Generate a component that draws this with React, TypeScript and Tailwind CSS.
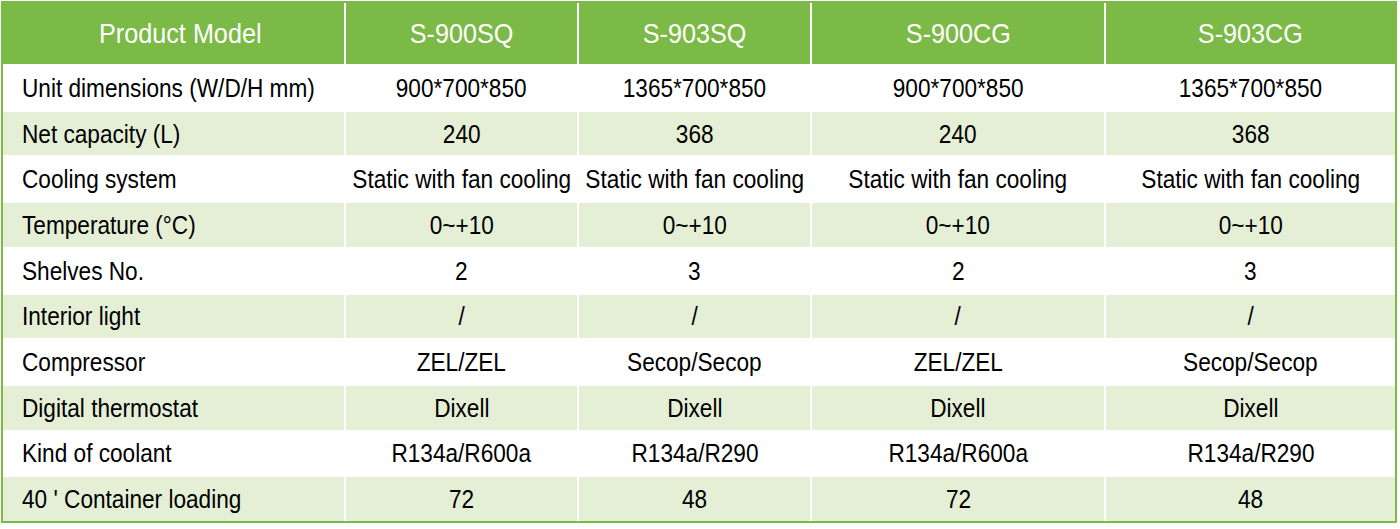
import React from "react";

const header = ["Product Model", "S-900SQ", "S-903SQ", "S-900CG", "S-903CG"];

const rows: string[][] = [
  ["Unit dimensions (W/D/H mm)", "900*700*850", "1365*700*850", "900*700*850", "1365*700*850"],
  ["Net capacity (L)", "240", "368", "240", "368"],
  ["Cooling system", "Static with fan cooling", "Static with fan cooling", "Static with fan cooling", "Static with fan cooling"],
  ["Temperature (°C)", "0~+10", "0~+10", "0~+10", "0~+10"],
  ["Shelves No.", "2", "3", "2", "3"],
  ["Interior light", "/", "/", "/", "/"],
  ["Compressor", "ZEL/ZEL", "Secop/Secop", "ZEL/ZEL", "Secop/Secop"],
  ["Digital thermostat", "Dixell", "Dixell", "Dixell", "Dixell"],
  ["Kind of coolant", "R134a/R600a", "R134a/R290", "R134a/R600a", "R134a/R290"],
  ["40 ' Container loading", "72", "48", "72", "48"],
];

export default function App() {
  return (
    <div className="w-[1400px] h-[529px] bg-white pl-px pt-px" style={{ fontFamily: '"Liberation Sans", Arial, sans-serif' }}>
      <div className="w-[1396px] h-[522px] border-2 border-[#7cba47] bg-white">
        <div className="grid h-[518px] grid-cols-[341px_231px_231px_292px_289px] grid-rows-[61px_repeat(10,minmax(0,1fr))] gap-[2px] bg-white">
          {header.map((h, i) => (
            <div
              key={"h" + i}
              className={`flex items-center justify-center overflow-visible bg-[#7cba47] ${i === 0 ? "pl-[13px]" : ""}`}
            >
              <span className="inline-block shrink-0 whitespace-nowrap text-[28px] leading-none text-white scale-x-[0.9] origin-center">
                {h}
              </span>
            </div>
          ))}
          {rows.map((r, ri) => {
            const bg = ri % 2 === 0 ? "bg-white" : "bg-[#e4efd6]";
            return r.map((c, ci) =>
              ci === 0 ? (
                <div key={ri + "-" + ci} className={`flex items-center pl-[19px] ${bg}`}>
                  <span className="inline-block shrink-0 whitespace-nowrap text-[26px] leading-none text-black scale-x-[0.87] origin-left">
                    {c}
                  </span>
                </div>
              ) : (
                <div key={ri + "-" + ci} className={`flex items-center justify-center ${bg}`}>
                  <span className="inline-block shrink-0 whitespace-nowrap text-[26px] leading-none text-black scale-x-[0.87] origin-center">
                    {c}
                  </span>
                </div>
              )
            );
          })}
        </div>
      </div>
    </div>
  );
}
